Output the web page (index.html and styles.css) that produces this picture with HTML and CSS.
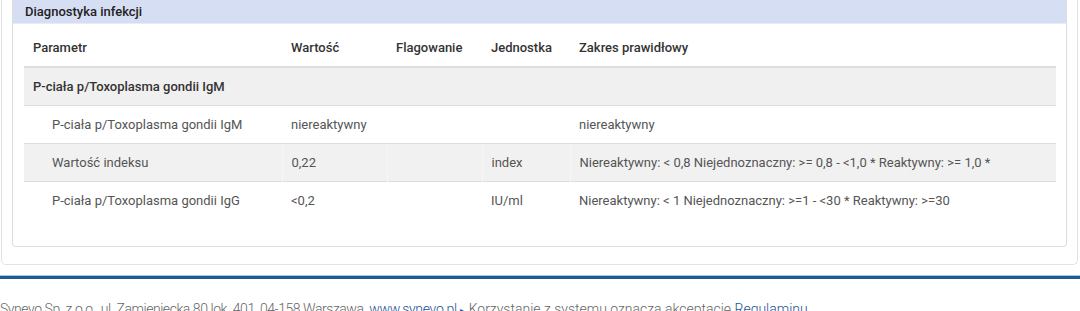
FILE: index.html
```html
<!DOCTYPE html>
<html lang="pl">
<head>
<meta charset="utf-8">
<link rel="stylesheet" href="styles.css">
</head>
<body>
<div class="well">
  <div class="panel">
    <div class="panel-heading">Diagnostyka infekcji</div>
    <div class="panel-body">
      <table class="results">
        <colgroup>
          <col class="c1"><col class="c2"><col class="c3"><col class="c4"><col class="c5">
        </colgroup>
        <thead>
          <tr><th>Parametr</th><th>Wartość</th><th>Flagowanie</th><th>Jednostka</th><th>Zakres prawidłowy</th></tr>
        </thead>
        <tbody>
          <tr class="group"><td colspan="5">P-ciała p/Toxoplasma gondii IgM</td></tr>
          <tr><td class="ind">P-ciała p/Toxoplasma gondii IgM</td><td>niereaktywny</td><td></td><td></td><td>niereaktywny</td></tr>
          <tr class="stripe"><td class="ind">Wartość indeksu</td><td>0,22</td><td></td><td>index</td><td>Niereaktywny: &lt; 0,8 Niejednoznaczny: &gt;= 0,8 - &lt;1,0 * Reaktywny: &gt;= 1,0 *</td></tr>
          <tr><td class="ind">P-ciała p/Toxoplasma gondii IgG</td><td>&lt;0,2</td><td></td><td>IU/ml</td><td>Niereaktywny: &lt; 1 Niejednoznaczny: &gt;=1 - &lt;30 * Reaktywny: &gt;=30</td></tr>
        </tbody>
      </table>
    </div>
  </div>
</div>
<footer class="footer">
  <span class="addr">Synevo Sp. z o.o., ul. Zamieniecka 80 lok. 401, 04-158 Warszawa,</span> <a class="site" href="#">www.synevo.pl</a> <span class="arrow">▸</span> Korzystanie z systemu oznacza akceptację <a href="#">Regulaminu</a>.
</footer>
</body>
</html>
```

FILE: styles.css
```css
html, body {
  margin: 0;
  padding: 0;
  background: #fff;
  font-family: Roboto, "Liberation Sans", sans-serif;
  color: #444;
  overflow: hidden;
}

.well {
  margin: 0 2px 0 1px;
  border: 1px solid #e3e3e3;
  border-top: none;
  border-radius: 0 0 5px 5px;
  padding: 0 10px 17px 10px;
  background: #fff;
}

.panel {
  border: 1px solid #dedede;
  border-top: none;
  border-radius: 0 0 4px 4px;
  background: #fff;
}

.panel-heading {
  background: #d6def4;
  height: 24px;
  line-height: 24px;
  padding: 0 12px;
  font-size: 13px;
  font-weight: 500;
  color: #222;
  border-bottom: 1px solid #e6ebf7;
  box-sizing: border-box;
}

.panel-body {
  padding: 0 10px 27px 11px;
}

.results {
  width: 100%;
  border-collapse: collapse;
  font-size: 13px;
}

.c1 { width: 258px; }
.c2 { width: 105px; }
.c3 { width: 95px; }
.c4 { width: 88px; }

.results th {
  text-align: left;
  font-weight: 500;
  color: #333;
  height: 38px;
  padding: 4px 9px 0 9px;
  border-bottom: 2px solid #dddddd;
}

.results td {
  height: 37px;
  padding: 0 9px;
  border-top: 1px solid #dddddd;
  color: #555;
  white-space: nowrap;
}

.results tbody tr:first-child td {
  border-top: none;
}

.results tr.group td {
  background: #f0f0f0;
  font-weight: 500;
  color: #333;
}

.results tr.stripe td {
  background: #f1f1f1;
}

.results tr.stripe td + td {
  border-left: 1px solid #f6f6f6;
}

.results td.ind {
  padding-left: 28px;
}

.footer {
  margin-top: 11px;
  border-top: 3px solid #1f5a94;
  box-shadow: 0 -1px 0 #a9c8e8;
  padding: 20px 0 0 0;
  font-family: Roboto, "Liberation Sans", sans-serif;
  font-size: 14px;
  font-weight: 300;
  line-height: 20px;
  color: #666;
  white-space: nowrap;
}

.footer .addr {
  letter-spacing: -0.45px;
}

.footer a {
  color: #1c5296;
  text-decoration: none;
}

.footer a.site {
  letter-spacing: -0.3px;
}

.footer .arrow {
  color: #1c5296;
  font-size: 10px;
}
```
